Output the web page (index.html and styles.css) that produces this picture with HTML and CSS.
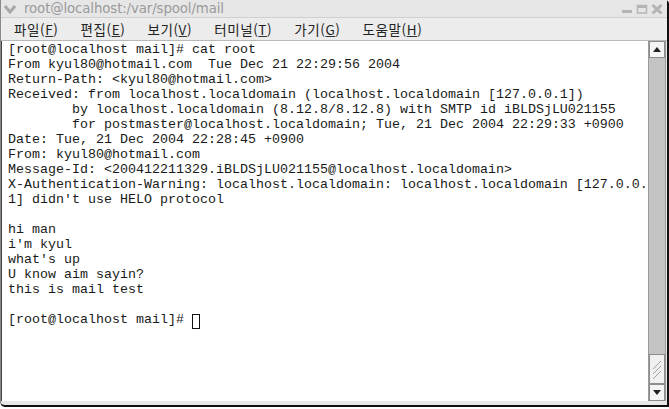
FILE: index.html
```
<!DOCTYPE html>
<html lang="ko">
<head>
    <meta charset="UTF-8">
    <title>root@localhost:/var/spool/mail</title>
    <link rel="stylesheet" href="styles.css">
</head>
<body>
    <div class="window">
        <div class="titlebar">
            <svg class="chevron" width="12" height="10" viewBox="0 0 12 10">
                <path d="M1 2 L6 8 L11 2" fill="none" stroke="#a8a8a8" stroke-width="3"/>
            </svg>
            <span class="title">root@localhost:/var/spool/mail</span>
            <div class="controls">
                <svg width="12" height="10" viewBox="0 0 12 10"><rect x="1" y="6" width="10" height="3" fill="#b4b4b4"/></svg>
                <svg width="12" height="10" viewBox="0 0 12 10"><rect x="1.5" y="1.5" width="9" height="7.5" fill="none" stroke="#b4b4b4" stroke-width="1.5"/><rect x="1" y="1" width="10" height="3" fill="#b4b4b4"/></svg>
                <svg width="12" height="10" viewBox="0 0 12 10"><path d="M1.5 1 L10.5 9.5 M10.5 1 L1.5 9.5" stroke="#b4b4b4" stroke-width="3"/></svg>
            </div>
        </div>

        <div class="menubar">
            <span class="menu">파일(<u>F</u>)</span>
            <span class="menu">편집(<u>E</u>)</span>
            <span class="menu">보기(<u>V</u>)</span>
            <span class="menu">터미널(<u>T</u>)</span>
            <span class="menu">가기(<u>G</u>)</span>
            <span class="menu">도움말(<u>H</u>)</span>
        </div>

        <div class="body">
            <pre class="terminal">[root@localhost mail]# cat root
From kyul80@hotmail.com  Tue Dec 21 22:29:56 2004
Return-Path: &lt;kyul80@hotmail.com&gt;
Received: from localhost.localdomain (localhost.localdomain [127.0.0.1])
        by localhost.localdomain (8.12.8/8.12.8) with SMTP id iBLDSjLU021155
        for postmaster@localhost.localdomain; Tue, 21 Dec 2004 22:29:33 +0900
Date: Tue, 21 Dec 2004 22:28:45 +0900
From: kyul80@hotmail.com
Message-Id: &lt;200412211329.iBLDSjLU021155@localhost.localdomain&gt;
X-Authentication-Warning: localhost.localdomain: localhost.localdomain [127.0.0.
1] didn't use HELO protocol

hi man
i'm kyul
what's up
U know aim sayin?
this is mail test

[root@localhost mail]# <span class="cursor"> </span></pre>

            <div class="scrollbar">
                <div class="arrow up">
                    <svg width="8" height="5" viewBox="0 0 8 5"><path d="M0 5 L4 0 L8 5 Z" fill="#222"/></svg>
                </div>
                <div class="trough"></div>
                <div class="thumb">
                    <svg width="14" height="28" viewBox="0 0 14 28">
                        <path d="M3 14 L11 6 M3 19 L11 11 M3 24 L11 16" stroke="#a0a0a0" stroke-width="1"/>
                    </svg>
                </div>
                <div class="arrow down">
                    <svg width="8" height="5" viewBox="0 0 8 5"><path d="M0 0 L8 0 L4 5 Z" fill="#222"/></svg>
                </div>
            </div>
        </div>
    </div>
</body>
</html>
```

FILE: styles.css
```
html, body {
    margin: 0;
    padding: 0;
    width: 669px;
    height: 409px;
    overflow: hidden;
    background: #fff;
}

.window {
    box-sizing: border-box;
    width: 669px;
    height: 407px;
    display: flex;
    flex-direction: column;
    background: #e8e8e8;
    border-left: 1px solid #8a8a8a;
    border-right: 2px solid #111;
    border-bottom: 2px solid #111;
    border-bottom-left-radius: 5px;
    border-top-right-radius: 4px;
}

.titlebar {
    height: 17px;
    display: flex;
    align-items: center;
    padding-left: 3px;
    background: #e6e6e6;
    border-bottom: 1px solid #d0d0d0;
}

.chevron {
    margin-right: 8px;
}

.title {
    font-family: "DejaVu Sans", sans-serif;
    font-size: 13.3px;
    color: #9a9a9a;
    letter-spacing: -0.1px;
}

.controls {
    margin-left: auto;
    margin-right: 4px;
    display: flex;
    gap: 3px;
}

.menubar {
    height: 22px;
    display: flex;
    align-items: center;
    gap: 22px;
    padding-left: 13px;
    background: #ececec;
    border-bottom: 1px solid #b8b8b8;
}

.menu {
    font-family: "Noto Sans CJK KR", "Noto Sans", sans-serif;
    font-size: 13.5px;
    letter-spacing: 0.6px;
    color: #222;
}

.menu u {
    text-decoration-color: #333;
}

.body {
    flex: 1;
    display: flex;
    padding: 0 1px 4px 0;
}

.terminal {
    flex: 1;
    margin: 0;
    padding: 1px 0 0 6px;
    background: #fff;
    border-left: 1px solid #444;
    font-family: "Liberation Mono", monospace;
    font-size: 13.33px;
    line-height: 15px;
    color: #1a1a1a;
    overflow: hidden;
}

.cursor {
    display: inline-block;
    width: 6px;
    height: 13px;
    border: 1px solid #111;
    vertical-align: -3px;
}

.scrollbar {
    width: 16px;
    display: flex;
    flex-direction: column;
    background: #c4c4c4;
    border-left: 1px solid #9a9a9a;
    border-right: 1px solid #9a9a9a;
}

.arrow {
    height: 15px;
    display: flex;
    align-items: center;
    justify-content: center;
    background: #f4f4f4;
    border: 1px solid #8c8c8c;
}

.trough {
    flex: 1;
}

.thumb {
    height: 28px;
    background: #f0f0f0;
    border: 1px solid #8c8c8c;
    display: flex;
}
```
